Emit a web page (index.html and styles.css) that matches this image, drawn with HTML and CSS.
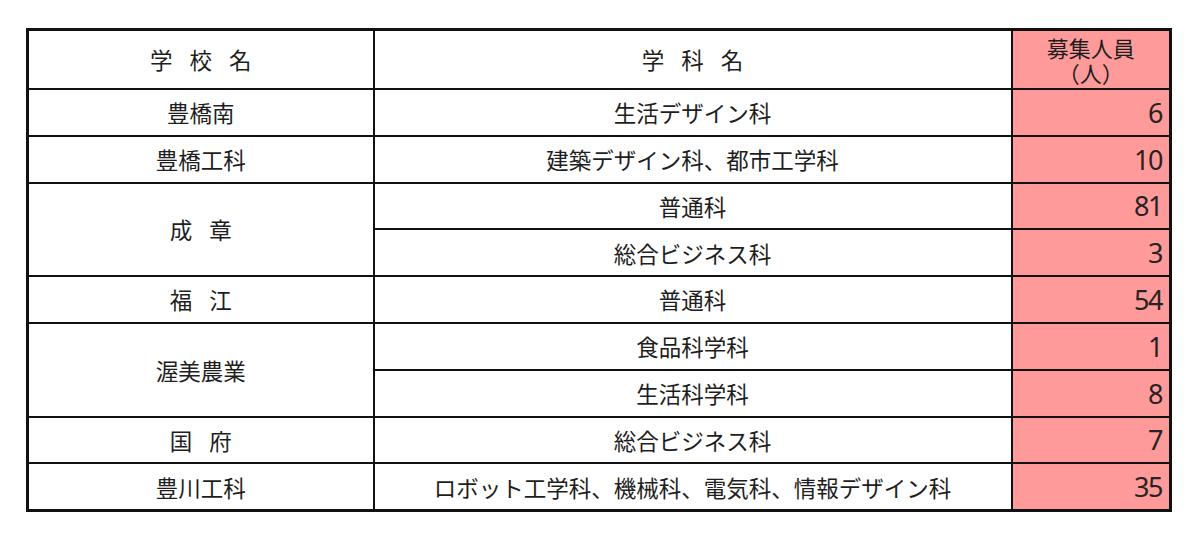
FILE: index.html
```html
<!DOCTYPE html>
<html lang="ja">
<head>
<meta charset="utf-8">
<link rel="stylesheet" href="styles.css">
</head>
<body>
<table class="recruit">
  <colgroup>
    <col class="c-school">
    <col class="c-dept">
    <col class="c-num">
  </colgroup>
  <thead>
    <tr class="head">
      <th class="spaced">学 校 名</th>
      <th class="spaced">学 科 名</th>
      <th class="num-head"><span class="hl">募集人員</span><span class="hl">（人）</span></th>
    </tr>
  </thead>
  <tbody>
    <tr><td>豊橋南</td><td>生活デザイン科</td><td class="num">6</td></tr>
    <tr><td>豊橋工科</td><td>建築デザイン科、都市工学科</td><td class="num">10</td></tr>
    <tr><td rowspan="2" class="spaced">成 章</td><td>普通科</td><td class="num">81</td></tr>
    <tr><td>総合ビジネス科</td><td class="num">3</td></tr>
    <tr><td class="spaced">福 江</td><td>普通科</td><td class="num">54</td></tr>
    <tr><td rowspan="2">渥美農業</td><td>食品科学科</td><td class="num">1</td></tr>
    <tr><td>生活科学科</td><td class="num">8</td></tr>
    <tr><td class="spaced">国 府</td><td>総合ビジネス科</td><td class="num">7</td></tr>
    <tr><td>豊川工科</td><td>ロボット工学科、機械科、電気科、情報デザイン科</td><td class="num">35</td></tr>
  </tbody>
</table>
</body>
</html>
```

FILE: styles.css
```css
html, body {
  margin: 0;
  background: #ffffff;
}
body {
  padding: 28px 0 0 26px;
  font-family: "Noto Sans CJK JP", "Noto Sans", sans-serif;
  color: #1e1e1e;
}
.recruit {
  border-collapse: collapse;
  table-layout: fixed;
  width: 1143px;
  border: 3px solid #111;
}
.c-school { width: 346px; }
.c-dept { width: 638px; }
.c-num { width: 159px; }
.recruit th,
.recruit td {
  border: 2px solid #111;
  font-size: 22.5px;
  font-weight: normal;
  line-height: 1;
  text-align: center;
  padding: 0;
  height: 44.8px;
}
.recruit .head th {
  height: 57px;
}
.spaced {
  word-spacing: 12px;
}
.recruit .num-head {
  background: #fe9a9a;
  font-size: 22px;
  vertical-align: middle;
}
.hl {
  display: block;
  line-height: 25px;
}
.recruit .num {
  background: #fe9a9a;
  text-align: right;
  padding-right: 7px;
  font-family: "Noto Sans", "Open Sans", sans-serif;
  font-size: 27px;
  letter-spacing: -1.5px;
  color: #2a2222;
}
```
